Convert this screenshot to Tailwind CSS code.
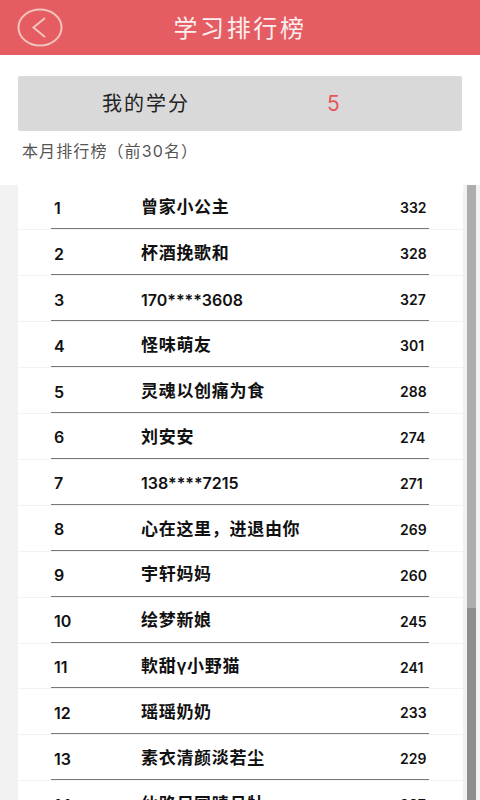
<!DOCTYPE html>
<html lang="zh">
<head>
    <meta charset="UTF-8">
    <title>学习排行榜</title>
    <script src="https://cdn.jsdelivr.net/npm/@tailwindcss/browser@4"></script>
</head>
<body class="font-['Inter','Noto_Sans_CJK_SC',sans-serif] bg-white w-[480px] h-[800px] overflow-hidden">

    <!-- header -->
    <div class="relative h-[55px] pt-[2px] bg-[#e55c62] flex items-center justify-center">
        <svg class="absolute left-[17px] top-[8px]" width="46" height="39" viewBox="0 0 46 39" fill="none" stroke="#f3c4bd" stroke-width="2">
            <ellipse cx="23" cy="19.5" rx="21.5" ry="18"/>
            <path d="M28 10 L16.5 19.5 L28 29"/>
        </svg>
        <span class="text-[24px] tracking-[2.6px] text-[#fbeeee]">学习排行榜</span>
    </div>

    <!-- my score -->
    <div class="h-[129.5px] px-[18px] pt-[21px]">
        <div class="h-[55px] bg-[#d9d9d9] rounded-[2px] flex items-center">
            <span class="ml-[84px] w-[225px] text-[20px] tracking-[2px] text-[#222]">我的学分</span>
            <span class="text-[21px] text-[#e6555b]">5</span>
        </div>
        <p class="mt-[8px] ml-[4px] text-[16px] tracking-[1.1px] text-[#555]">本月排行榜（前30名）</p>
    </div>

    <!-- ranking list -->
    <div class="flex h-[615.5px] bg-[#f2f2f2] overflow-hidden">
        <div class="w-[463px] pl-[18px]">
            <div class="h-[45.92px] bg-white border-b border-[#f3f3f3] flex flex-col"><div class="flex-1 pt-[3px] flex items-center pl-[36px] text-[#111]"><span class="w-[87px] text-[16px] font-semibold">1</span><span class="w-[259px] text-[17px] tracking-[0.7px] font-bold">曾家小公主</span><span class="text-[14px] font-semibold">332</span></div><div class="ml-[33px] mr-[34px] h-px bg-[#777]"></div></div>
            <div class="h-[45.92px] bg-white border-b border-[#f3f3f3] flex flex-col"><div class="flex-1 pt-[3px] flex items-center pl-[36px] text-[#111]"><span class="w-[87px] text-[16px] font-semibold">2</span><span class="w-[259px] text-[17px] tracking-[0.7px] font-semibold">杯酒挽歌和</span><span class="text-[14px] font-semibold">328</span></div><div class="ml-[33px] mr-[34px] h-px bg-[#777]"></div></div>
            <div class="h-[45.92px] bg-white border-b border-[#f3f3f3] flex flex-col"><div class="flex-1 pt-[3px] flex items-center pl-[36px] text-[#111]"><span class="w-[87px] text-[16px] font-semibold">3</span><span class="w-[259px] text-[16px] font-semibold">170****3608</span><span class="text-[14px] font-semibold">327</span></div><div class="ml-[33px] mr-[34px] h-px bg-[#777]"></div></div>
            <div class="h-[45.92px] bg-white border-b border-[#f3f3f3] flex flex-col"><div class="flex-1 pt-[3px] flex items-center pl-[36px] text-[#111]"><span class="w-[87px] text-[16px] font-semibold">4</span><span class="w-[259px] text-[17px] tracking-[0.7px] font-semibold">怪味萌友</span><span class="text-[14px] font-semibold">301</span></div><div class="ml-[33px] mr-[34px] h-px bg-[#777]"></div></div>
            <div class="h-[45.92px] bg-white border-b border-[#f3f3f3] flex flex-col"><div class="flex-1 pt-[3px] flex items-center pl-[36px] text-[#111]"><span class="w-[87px] text-[16px] font-semibold">5</span><span class="w-[259px] text-[17px] tracking-[0.7px] font-semibold">灵魂以创痛为食</span><span class="text-[14px] font-semibold">288</span></div><div class="ml-[33px] mr-[34px] h-px bg-[#777]"></div></div>
            <div class="h-[45.92px] bg-white border-b border-[#f3f3f3] flex flex-col"><div class="flex-1 pt-[3px] flex items-center pl-[36px] text-[#111]"><span class="w-[87px] text-[16px] font-semibold">6</span><span class="w-[259px] text-[17px] tracking-[0.7px] font-semibold">刘安安</span><span class="text-[14px] font-semibold">274</span></div><div class="ml-[33px] mr-[34px] h-px bg-[#777]"></div></div>
            <div class="h-[45.92px] bg-white border-b border-[#f3f3f3] flex flex-col"><div class="flex-1 pt-[3px] flex items-center pl-[36px] text-[#111]"><span class="w-[87px] text-[16px] font-semibold">7</span><span class="w-[259px] text-[16px] font-semibold">138****7215</span><span class="text-[14px] font-semibold">271</span></div><div class="ml-[33px] mr-[34px] h-px bg-[#777]"></div></div>
            <div class="h-[45.92px] bg-white border-b border-[#f3f3f3] flex flex-col"><div class="flex-1 pt-[3px] flex items-center pl-[36px] text-[#111]"><span class="w-[87px] text-[16px] font-semibold">8</span><span class="w-[259px] text-[17px] tracking-[0.7px] font-semibold">心在这里，进退由你</span><span class="text-[14px] font-semibold">269</span></div><div class="ml-[33px] mr-[34px] h-px bg-[#777]"></div></div>
            <div class="h-[45.92px] bg-white border-b border-[#f3f3f3] flex flex-col"><div class="flex-1 pt-[3px] flex items-center pl-[36px] text-[#111]"><span class="w-[87px] text-[16px] font-semibold">9</span><span class="w-[259px] text-[17px] tracking-[0.7px] font-semibold">宇轩妈妈</span><span class="text-[14px] font-semibold">260</span></div><div class="ml-[33px] mr-[34px] h-px bg-[#777]"></div></div>
            <div class="h-[45.92px] bg-white border-b border-[#f3f3f3] flex flex-col"><div class="flex-1 pt-[3px] flex items-center pl-[36px] text-[#111]"><span class="w-[87px] text-[16px] font-semibold">10</span><span class="w-[259px] text-[17px] tracking-[0.7px] font-semibold">绘梦新娘</span><span class="text-[14px] font-semibold">245</span></div><div class="ml-[33px] mr-[34px] h-px bg-[#777]"></div></div>
            <div class="h-[45.92px] bg-white border-b border-[#f3f3f3] flex flex-col"><div class="flex-1 pt-[3px] flex items-center pl-[36px] text-[#111]"><span class="w-[87px] text-[16px] font-semibold">11</span><span class="w-[259px] text-[17px] tracking-[0.7px] font-semibold">軟甜γ小野猫</span><span class="text-[14px] font-semibold">241</span></div><div class="ml-[33px] mr-[34px] h-px bg-[#777]"></div></div>
            <div class="h-[45.92px] bg-white border-b border-[#f3f3f3] flex flex-col"><div class="flex-1 pt-[3px] flex items-center pl-[36px] text-[#111]"><span class="w-[87px] text-[16px] font-semibold">12</span><span class="w-[259px] text-[17px] tracking-[0.7px] font-semibold">瑶瑶奶奶</span><span class="text-[14px] font-semibold">233</span></div><div class="ml-[33px] mr-[34px] h-px bg-[#777]"></div></div>
            <div class="h-[45.92px] bg-white border-b border-[#f3f3f3] flex flex-col"><div class="flex-1 pt-[3px] flex items-center pl-[36px] text-[#111]"><span class="w-[87px] text-[16px] font-semibold">13</span><span class="w-[259px] text-[17px] tracking-[0.7px] font-semibold">素衣清颜淡若尘</span><span class="text-[14px] font-semibold">229</span></div><div class="ml-[33px] mr-[34px] h-px bg-[#777]"></div></div>
            <div class="h-[45.92px] bg-white border-b border-[#f3f3f3] flex flex-col"><div class="flex-1 pt-[3px] flex items-center pl-[36px] text-[#111]"><span class="w-[87px] text-[16px] font-semibold">14</span><span class="w-[259px] text-[17px] tracking-[0.7px] font-semibold">仙路尽国晴月牡</span><span class="text-[14px] font-semibold">207</span></div><div class="ml-[33px] mr-[34px] h-px bg-[#777]"></div></div>
        </div>
        <!-- scrollbar -->
        <div class="ml-[4px] w-[9px] bg-[#adadad] flex flex-col">
            <div class="h-[423px]"></div>
            <div class="flex-1 bg-[#8e8e8e]"></div>
        </div>
    </div>
</body>
</html>
